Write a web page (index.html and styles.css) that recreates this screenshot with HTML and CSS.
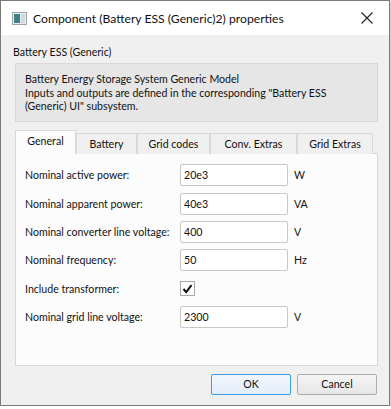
FILE: index.html
```html
<!DOCTYPE html>
<html>
<head>
<meta charset="utf-8">
<link rel="stylesheet" href="styles.css">
</head>
<body>
<div class="window">
  <div class="titlebar">
    <svg class="appicon" width="15" height="13" viewBox="0 0 15 13">
      <rect x="0.5" y="0.5" width="14" height="12" fill="#e9eef0" stroke="#9aa4a8"/>
      <rect x="2" y="2" width="6" height="9" fill="#3f7f86"/>
      <rect x="9" y="2" width="4" height="9" fill="#cfd8da"/>
    </svg>
    <span class="title">Component (Battery ESS (Generic)2) properties</span>
    <svg class="close" width="12" height="12" viewBox="0 0 12 12">
      <path d="M0.5 0.5 L11.5 11.5 M11.5 0.5 L0.5 11.5" stroke="#222" stroke-width="1.1"/>
    </svg>
  </div>
  <div class="client">
    <div class="heading">Battery ESS (Generic)</div>
    <div class="desc">Battery Energy Storage System Generic Model<br>Inputs and outputs are defined in the corresponding "Battery ESS<br>(Generic) UI" subsystem.</div>
    <div class="tabs">
      <div class="tab active t1">General</div>
      <div class="tab t2">Battery</div>
      <div class="tab t3">Grid codes</div>
      <div class="tab t4">Conv. Extras</div>
      <div class="tab t5">Grid Extras</div>
    </div>
    <div class="pane">
      <div class="row"><span class="label">Nominal active power:</span><span class="input">20e3</span><span class="unit">W</span></div>
      <div class="row"><span class="label">Nominal apparent power:</span><span class="input">40e3</span><span class="unit">VA</span></div>
      <div class="row"><span class="label">Nominal converter line voltage:</span><span class="input">400</span><span class="unit">V</span></div>
      <div class="row"><span class="label">Nominal frequency:</span><span class="input">50</span><span class="unit">Hz</span></div>
      <div class="row"><span class="label">Include transformer:</span><span class="check"><svg width="11" height="10" viewBox="0 0 11 10"><path d="M1.5 5 L4.2 8.2 L9.5 1.2" fill="none" stroke="#111" stroke-width="2"/></svg></span></div>
      <div class="row"><span class="label">Nominal grid line voltage:</span><span class="input">2300</span><span class="unit">V</span></div>
    </div>
    <div class="buttons">
      <div class="btn default">OK</div>
      <div class="btn">Cancel</div>
    </div>
  </div>
</div>
</body>
</html>
```
FILE: styles.css
```css
html, body {
  margin: 0;
  padding: 0;
  background: #ffffff;
}
body {
  font-family: "Lato", "Noto Sans", sans-serif;
  font-size: 10.6px;
  color: #111111;
  white-space: nowrap;
}
.window {
  box-sizing: border-box;
  width: 390px;
  height: 406px;
  border: 1px solid #7a7a7a;
  background: #f0f0f0;
  display: flex;
  flex-direction: column;
  box-shadow: 1px 1px 2px rgba(0,0,0,0.25);
}
.titlebar {
  height: 34px;
  background: #ffffff;
  display: flex;
  align-items: center;
  padding-left: 11px;
  padding-right: 14px;
}
.appicon {
  margin-right: 6px;
}
.title {
  font-size: 12.2px;
  color: #111;
  flex: 1;
}
.close {
  margin-right: 2px;
}
.client {
  flex: 1;
  display: flex;
  flex-direction: column;
  padding: 9px 11px 0 12px;
}
.heading {
  height: 16px;
  line-height: 16px;
  margin-bottom: 3px;
}
.desc {
  box-sizing: border-box;
  background: #e6e6e6;
  border: 1px solid #d9d9d9;
  margin-left: 2px;
  padding: 9px 9px;
  line-height: 13.5px;
  height: 59px;
}
.tabs {
  display: flex;
  margin-top: 8px;
  margin-left: 2px;
  height: 24px;
  align-items: flex-end;
  position: relative;
  z-index: 1;
}
.tab {
  box-sizing: border-box;
  height: 21px;
  line-height: 20px;
  border: 1px solid #d9d9d9;
  border-bottom: none;
  background: #f0f0f0;
  text-align: center;
}
.tab.active {
  height: 24px;
  line-height: 21px;
  background: #fcfcfc;
}
.t1 { width: 61px; }
.t2 { width: 61px; }
.t3 { width: 73px; }
.t4 { width: 87px; }
.t5 { width: 76px; }
.pane {
  box-sizing: border-box;
  margin-left: 2px;
  margin-top: -1px;
  height: 213px;
  background: #fcfcfc;
  border: 1px solid #d9d9d9;
  padding: 7px 0 0 9px;
}
.row {
  height: 28.4px;
  display: flex;
  align-items: center;
}
.label {
  width: 155px;
}
.input {
  box-sizing: border-box;
  width: 108px;
  height: 22px;
  line-height: 20px;
  border: 1px solid #c8c8c8;
  border-radius: 2px;
  background: #fff;
  padding-left: 3px;
}
.unit {
  margin-left: 6px;
}
.check {
  width: 13px;
  height: 13px;
  border: 1px solid #a8a8a8;
  background: #fff;
  display: flex;
  align-items: center;
  justify-content: center;
}
.buttons {
  display: flex;
  justify-content: flex-end;
  gap: 6px;
  margin-top: 8px;
  padding-right: 1px;
}
.btn {
  box-sizing: border-box;
  width: 80px;
  height: 21px;
  line-height: 19px;
  text-align: center;
  border: 1px solid #adadad;
  border-radius: 2px;
  background: linear-gradient(#f5f5f5, #e6e6e6);
}
.btn.default {
  border-color: #3c9ae0;
  background: linear-gradient(#f0f6fc, #e3eef8);
}
```
